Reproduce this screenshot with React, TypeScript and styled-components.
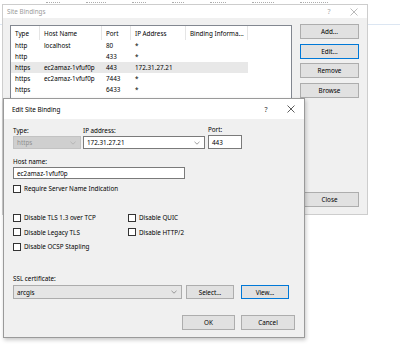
import React from 'react';
import styled, { createGlobalStyle } from 'styled-components';

const GlobalStyle = createGlobalStyle`
  html, body {
    margin: 0;
    padding: 0;
    background: #fff;
  }
  body {
    font-family: "Segoe UI", "Noto Sans", sans-serif;
    font-size: 6.3px;
    color: #000;
  }
`;

const Desktop = styled.div`
  position: relative;
  width: 400px;
  height: 348px;
  overflow: hidden;
  background: #fff;
`;

// the window behind both dialogs: only the clipped bottoms of its column titles show
const BackHeader = styled.div`
  height: 25px;
  box-sizing: border-box;
  border-bottom: 1px solid #dce6f2;
  display: flex;
  align-items: flex-start;
  gap: 26px;
  padding-left: 46px;
`;

const BackFragment = styled.span<{ $width: number }>`
  width: ${p => p.$width}px;
  height: 2px;
  border-bottom: 1px dotted #8a8a8a;
  opacity: 0.7;
`;

const Window = styled.div<{ $left: number; $top: number; $width: number; $height: number; $active?: boolean }>`
  position: absolute;
  left: ${p => p.$left}px;
  top: ${p => p.$top}px;
  width: ${p => p.$width}px;
  height: ${p => p.$height}px;
  box-sizing: border-box;
  border: 1px solid ${p => (p.$active ? '#9a9a9a' : '#cdcdcd')};
  box-shadow: ${p => (p.$active ? '1px 2px 4px rgba(0,0,0,0.22)' : 'none')};
  background: #f0f0f0;
  display: flex;
  flex-direction: column;
`;

const TitleBar = styled.div<{ $height: number; $active?: boolean }>`
  height: ${p => p.$height}px;
  flex: none;
  background: #fff;
  display: flex;
  align-items: center;
  padding-left: ${p => (p.$active ? 8 : 4)}px;
  color: ${p => (p.$active ? '#000' : '#9a9a9a')};
`;

const TitleControls = styled.div<{ $active?: boolean }>`
  margin-left: auto;
  display: flex;
  align-items: center;
  gap: 17px;
  padding-right: 9px;
  color: ${p => (p.$active ? '#333' : '#a8a8a8')};
`;

const HelpMark = styled.span`
  width: 8px;
  text-align: center;
  font-size: 7px;
`;

function CloseMark() {
  return (
    <svg width="8" height="8" viewBox="0 0 8 8">
      <path d="M0.5 0.5 L7.5 7.5 M7.5 0.5 L0.5 7.5" stroke="currentColor" strokeWidth="0.8" fill="none" />
    </svg>
  );
}

function Chevron({ color }: { color: string }) {
  return (
    <svg width="6" height="4" viewBox="0 0 6 4">
      <polyline points="0.5,0.8 3,3.2 5.5,0.8" stroke={color} strokeWidth="0.7" fill="none" />
    </svg>
  );
}

/* ---- Site Bindings ---- */

const BindingsBody = styled.div`
  flex: 1;
  display: flex;
  gap: 8px;
  padding: 7px 8px 7px 7px;
`;

const ListBox = styled.div`
  width: 282px;
  box-sizing: border-box;
  border: 1px solid #828790;
  background: #fff;
  overflow: hidden;
`;

const COLUMNS = '29px 62px 29px 55px 62px';

const HeaderRow = styled.div`
  display: grid;
  grid-template-columns: ${COLUMNS};
  height: 14px;
`;

const HeaderCell = styled.div`
  display: flex;
  align-items: center;
  padding-left: 4px;
  border-right: 1px solid #e5e5e5;
  white-space: nowrap;
  overflow: hidden;
`;

const Row = styled.div<{ $selected?: boolean }>`
  display: grid;
  grid-template-columns: ${COLUMNS};
  width: 237px;
  height: 11px;
  background: ${p => (p.$selected ? '#e8e8e8' : 'transparent')};
`;

const Cell = styled.div`
  display: flex;
  align-items: center;
  padding-left: 4px;
  white-space: nowrap;
  overflow: hidden;
`;

const ButtonColumn = styled.div`
  width: 59px;
  display: flex;
  flex-direction: column;
  gap: 4.5px;
  margin-top: -1px;
`;

const PushButton = styled.button<{ $width?: number; $height?: number; $focused?: boolean }>`
  width: ${p => (p.$width ? `${p.$width}px` : '100%')};
  height: ${p => p.$height ?? 15}px;
  flex: none;
  box-sizing: border-box;
  padding: 0;
  background: #e1e1e1;
  border: 1px solid ${p => (p.$focused ? '#0078d7' : '#adadad')};
  font: inherit;
  color: #000;
`;

const BottomButton = styled(PushButton)`
  margin-top: auto;
`;

/* ---- Edit Site Binding ---- */

const EditBody = styled.div`
  flex: 1;
  display: flex;
  flex-direction: column;
  padding: 6px 9px 7px 9px;
`;

const FieldRow = styled.div<{ $gap: number; $top?: number }>`
  display: flex;
  align-items: flex-end;
  gap: ${p => p.$gap}px;
  margin-top: ${p => p.$top ?? 0}px;
`;

const Field = styled.div<{ $top?: number; $left?: number }>`
  display: flex;
  flex-direction: column;
  gap: 1px;
  margin-top: ${p => p.$top ?? 0}px;
  margin-left: ${p => p.$left ?? 0}px;
`;

const FieldLabel = styled.div`
  line-height: 9px;
  height: 9px;
  white-space: nowrap;
`;

const ComboBox = styled.div<{ $width: number; $height?: number; $kind: 'disabled' | 'edit' | 'list' }>`
  width: ${p => p.$width}px;
  height: ${p => p.$height ?? 13}px;
  box-sizing: border-box;
  display: flex;
  align-items: center;
  justify-content: space-between;
  padding: 0 4px 0 3px;
  background: ${p => (p.$kind === 'disabled' ? '#cfcfcf' : p.$kind === 'list' ? '#e5e5e5' : '#fff')};
  border: 1px solid ${p => (p.$kind === 'disabled' ? '#c2c2c2' : p.$kind === 'list' ? '#acacac' : '#7a7a7a')};
  color: ${p => (p.$kind === 'disabled' ? '#8f8f8f' : '#000')};
`;

const TextBox = styled.div<{ $width: number; $height: number }>`
  width: ${p => p.$width}px;
  height: ${p => p.$height}px;
  box-sizing: border-box;
  display: flex;
  align-items: center;
  padding-left: 3px;
  background: #fff;
  border: 1px solid #7a7a7a;
`;

const CheckRow = styled.label<{ $top?: number }>`
  display: flex;
  align-items: center;
  gap: 3px;
  height: 9px;
  margin-top: ${p => p.$top ?? 0}px;
  white-space: nowrap;
`;

const Box = styled.span`
  width: 8px;
  height: 8px;
  box-sizing: border-box;
  border: 1px solid #333;
  background: #fff;
  flex: none;
`;

const CheckGrid = styled.div`
  display: grid;
  grid-template-columns: 115px auto;
  grid-auto-rows: 9px;
  row-gap: 5.5px;
  margin-top: 20px;
`;

const DialogButtons = styled.div`
  margin-top: auto;
  display: flex;
  justify-content: flex-end;
  gap: 6px;
`;

const bindings = [
  { type: 'http', host: 'localhost', port: '80', ip: '*' },
  { type: 'http', host: '', port: '433', ip: '*' },
  { type: 'https', host: 'ec2amaz-1vfuf0p', port: '443', ip: '172.31.27.21', selected: true },
  { type: 'https', host: 'ec2amaz-1vfuf0p', port: '7443', ip: '*' },
  { type: 'https', host: '', port: '6433', ip: '*' },
];

const options = [
  'Disable TLS 1.3 over TCP',
  'Disable QUIC',
  'Disable Legacy TLS',
  'Disable HTTP/2',
  'Disable OCSP Stapling',
];

const backFragments = [14, 20, 14, 12, 16, 22, 28];

function App() {
  return (
    <Desktop>
      <GlobalStyle />
      <BackHeader>
        {backFragments.map((w, i) => (
          <BackFragment key={i} $width={w} />
        ))}
      </BackHeader>

      <Window $left={2} $top={4} $width={366} $height={211}>
        <TitleBar $height={13}>
          Site Bindings
          <TitleControls>
            <HelpMark>?</HelpMark>
            <CloseMark />
          </TitleControls>
        </TitleBar>
        <BindingsBody>
          <ListBox>
            <HeaderRow>
              <HeaderCell>Type</HeaderCell>
              <HeaderCell>Host Name</HeaderCell>
              <HeaderCell>Port</HeaderCell>
              <HeaderCell>IP Address</HeaderCell>
              <HeaderCell>Binding Informa...</HeaderCell>
            </HeaderRow>
            {bindings.map((b, i) => (
              <Row key={i} $selected={b.selected}>
                <Cell>{b.type}</Cell>
                <Cell>{b.host}</Cell>
                <Cell>{b.port}</Cell>
                <Cell>{b.ip}</Cell>
                <Cell />
              </Row>
            ))}
          </ListBox>
          <ButtonColumn>
            <PushButton>Add...</PushButton>
            <PushButton $focused>Edit...</PushButton>
            <PushButton>Remove</PushButton>
            <PushButton>Browse</PushButton>
            <BottomButton>Close</BottomButton>
          </ButtonColumn>
        </BindingsBody>
      </Window>

      <Window $left={3} $top={98} $width={302} $height={240} $active>
        <TitleBar $height={20} $active>
          Edit Site Binding
          <TitleControls $active>
            <HelpMark>?</HelpMark>
            <CloseMark />
          </TitleControls>
        </TitleBar>
        <EditBody>
          <FieldRow $gap={2}>
            <Field>
              <FieldLabel>Type:</FieldLabel>
              <ComboBox $width={68} $kind="disabled">
                https
                <Chevron color="#ababab" />
              </ComboBox>
            </Field>
            <Field>
              <FieldLabel>IP address:</FieldLabel>
              <ComboBox $width={122} $kind="edit">
                172.31.27.21
                <Chevron color="#777" />
              </ComboBox>
            </Field>
            <Field $left={1}>
              <FieldLabel>Port:</FieldLabel>
              <TextBox $width={34} $height={14}>443</TextBox>
            </Field>
          </FieldRow>

          <Field $top={8}>
            <FieldLabel>Host name:</FieldLabel>
            <TextBox $width={172} $height={12}>ec2amaz-1vfuf0p</TextBox>
          </Field>

          <CheckRow $top={5}>
            <Box />
            Require Server Name Indication
          </CheckRow>

          <CheckGrid>
            {options.map(o => (
              <CheckRow key={o}>
                <Box />
                {o}
              </CheckRow>
            ))}
          </CheckGrid>

          <Field $top={23}>
            <FieldLabel>SSL certificate:</FieldLabel>
            <FieldRow $gap={4} $top={1}>
              <ComboBox $width={169} $height={14} $kind="list">
                arcgis
                <Chevron color="#777" />
              </ComboBox>
              <PushButton $width={48} $height={14}>Select...</PushButton>
              <Field $left={3}>
                <PushButton $width={48} $height={14} $focused>View...</PushButton>
              </Field>
            </FieldRow>
          </Field>

          <DialogButtons>
            <PushButton $width={53}>OK</PushButton>
            <PushButton $width={54}>Cancel</PushButton>
          </DialogButtons>
        </EditBody>
      </Window>
    </Desktop>
  );
}

export default App;
